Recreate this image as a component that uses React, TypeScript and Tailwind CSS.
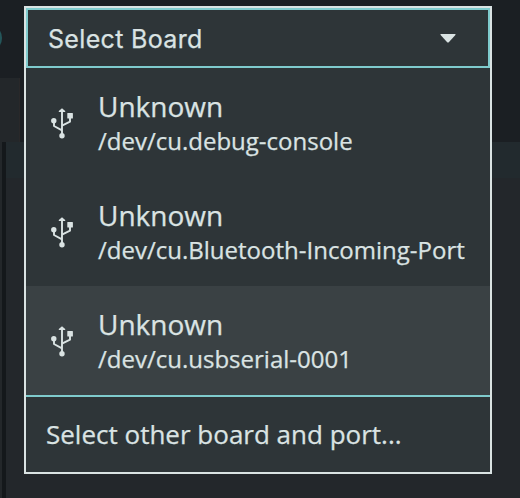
const ports = [
  { name: 'Unknown', path: '/dev/cu.debug-console' },
  { name: 'Unknown', path: '/dev/cu.Bluetooth-Incoming-Port' },
  { name: 'Unknown', path: '/dev/cu.usbserial-0001', active: true },
];

function UsbIcon() {
  return (
    <svg width="24" height="33" viewBox="0 0 24 33" fill="none" className="shrink-0">
      <path d="M12 4v25M4 15v5l8 4.3M20 11.5v4.2l-8 4" stroke="#dae3e3" strokeWidth="1.9" strokeLinejoin="round" />
      <path d="M12 2.2l3.2 2.9v1H8.8v-1z" fill="#dae3e3" />
      <circle cx="3.8" cy="14.7" r="2.7" fill="#dae3e3" />
      <rect x="17.3" y="7" width="5.6" height="5.6" rx="0.5" fill="#dae3e3" />
      <circle cx="12" cy="29.7" r="2.7" fill="#dae3e3" />
    </svg>
  );
}

function Backdrop() {
  return (
    <div className="flex h-full flex-col">
      <div className="flex h-[142px] flex-col justify-between bg-[#1b1f23]">
        <div className="h-[78px] w-[2px] overflow-hidden pt-[24px]">
          <div className="-ml-[26px] h-[28px] w-[28px] rounded-full bg-[#24565a]" />
        </div>
        <div className="h-[64px] w-[20px] border-r border-[#292829] bg-[#23272a]" />
      </div>
      <div className="flex flex-1">
        <div className="w-[2px] bg-[#23272a]" />
        <div className="w-[4px] bg-[#14181b]" />
        <div className="flex flex-1 flex-col">
          <div className="h-[36px] bg-[#222a2e]" />
          <div className="flex-1 bg-[#23272b]" />
        </div>
      </div>
    </div>
  );
}

export default function App() {
  return (
    <div className="relative h-[498px] w-[520px] overflow-hidden font-['Open_Sans','Noto_Sans',sans-serif] text-[#dae3e3] [-webkit-text-stroke:0.25px_#dae3e3]">
      <Backdrop />
      <div className="absolute left-[24px] top-[6px] flex h-[468px] w-[468px] flex-col border-2 border-[#dae3e3] bg-[#2e3538]">
        <div className="flex h-[60px] items-center justify-between border-2 border-[#7fcbcd] pl-5 pr-8">
          <span className="whitespace-nowrap pt-0.5 font-['Inter',sans-serif] text-[25px] leading-none tracking-[0.33px]">Select Board</span>
          <svg width="16" height="9" viewBox="0 0 16 9">
            <path d="M1 0h14q1 0 .4 1L8.8 8.2q-.8.8-1.6 0L.6 1Q0 0 1 0z" fill="#dae3e3" />
          </svg>
        </div>
        {ports.map((p) => (
          <div key={p.path} className={`flex h-[109px] items-center pl-6 ${p.active ? 'bg-[#3a4144]' : ''}`}>
            <UsbIcon />
            <div className="ml-6 flex flex-col whitespace-nowrap">
              <span className="text-[28px] leading-[36px]">{p.name}</span>
              <span className="text-[24px] leading-[34px]">{p.path}</span>
            </div>
          </div>
        ))}
        <div className="flex flex-1 items-center border-t-2 border-[#7fcbcd] pb-0.5 pl-5">
          <span className="whitespace-nowrap text-[26px] leading-none">Select other board and port...</span>
        </div>
      </div>
    </div>
  );
}
